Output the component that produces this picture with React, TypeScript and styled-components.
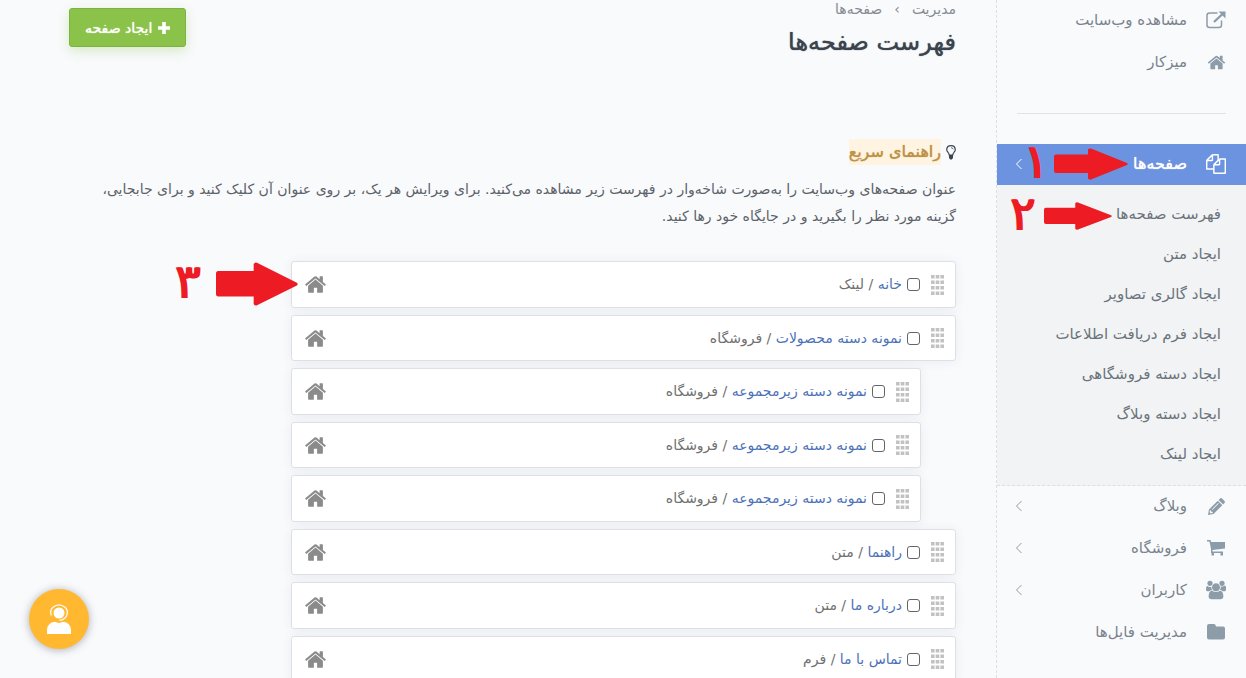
import React from 'react';
import styled, { createGlobalStyle } from 'styled-components';

const Global = createGlobalStyle`
  *, *::before, *::after { box-sizing: border-box; }
  body { margin: 0; background: #f9fafc; color: #5c6269; font: 15px/27px "DejaVu Sans", sans-serif; }
  a { color: inherit; text-decoration: none; }
  ul, ol { list-style: none; margin: 0; padding: 0; }
`;

const Shell = styled.div`
  display: flex;
  height: 100vh;
  overflow: hidden;
`;
const Sidebar = styled.nav`
  flex: 0 0 250px;
  border-left: 1px dashed #dcdfe3;
  font-size: 15px;
  line-height: 40px;
  color: #7a838c;
  overflow: hidden;
`;
const MenuLink = styled.a<{ $active?: boolean }>`
  display: flex;
  align-items: center;
  height: ${p => (p.$active ? 41 : 42)}px;
  padding: 0 18px 2px;
  background: ${p => (p.$active ? '#6c93e0' : 'transparent')};
  color: ${p => (p.$active ? '#fff' : 'inherit')};
  font-size: ${p => (p.$active ? 16 : 15)}px;
  text-shadow: ${p => (p.$active ? '0 0 1px currentColor' : 'none')};
  svg { color: ${p => (p.$active ? '#fff' : '#8d9ca9')}; }
`;
const IconSlot = styled.span`
  display: flex;
  justify-content: center;
  width: 24px;
  margin-left: 17px;
`;
const Chevron = styled.svg`
  margin-right: auto;
`;
const Divider = styled.hr`
  margin: 29px 20px 30px;
  border: 0;
  border-top: 1px solid #dfe4e9;
`;
const SubMenu = styled.ul`
  background: #f2f3f5;
  border-bottom: 1px dashed #dcdfe3;
  padding: 9px 25px 11px;
  line-height: 40px;
  color: #6a737b;
`;

const Main = styled.main`
  flex: 1;
  min-width: 0;
  padding: 0 40px 0 69px;
`;
const Header = styled.header`
  display: flex;
  justify-content: space-between;
  align-items: flex-start;
  height: 139px;
`;
const Crumbs = styled.ol`
  display: flex;
  align-items: center;
  gap: 12px;
  font-size: 14px;
  line-height: 18px;
  color: #858b92;
`;
const Title = styled.h1`
  margin: 4px 0 0;
  font-size: 24px;
  line-height: 40px;
  font-weight: 400;
  color: #3b444e;
  text-shadow: 0 0 1px currentColor;
`;
const AddButton = styled.button`
  display: flex;
  align-items: center;
  gap: 6px;
  height: 39px;
  margin-top: 8px;
  padding: 0 15px;
  border: 1px solid #7cb342;
  border-radius: 3px;
  background: #8bc34a;
  box-shadow: 0 4px 12px rgba(139, 195, 74, 0.3);
  color: #fff;
  font: 14px/20px "DejaVu Sans", sans-serif;
  text-shadow: 0 0 1px currentColor;
`;
const GuideTitle = styled.h2`
  display: flex;
  align-items: center;
  gap: 5px;
  margin: 0;
  font-size: 16px;
  line-height: 26px;
  font-weight: 400;
  color: #3b444e;
`;
const Mark = styled.mark`
  background: #fff3e2;
  color: #bd9147;
  text-shadow: 0 0 1px currentColor;
`;
const Guide = styled.p`
  margin: 11px 0 31px;
  font-size: 14px;
  line-height: 27px;
`;
const Tree = styled.ul`
  display: flex;
  flex-direction: column;
  gap: 7px;
  width: 77%;
  max-width: 665px;
`;
const Item = styled.li<{ $child?: boolean }>`
  display: flex;
  flex-shrink: 0;
  align-items: center;
  height: 46px;
  margin-right: ${p => (p.$child ? 35 : 0)}px;
  padding: 0 11px 0 12px;
  border: 1px solid #dde0e5;
  border-radius: 3px;
  background: #fff;
  box-shadow: 0 1px 12px rgba(40, 60, 90, 0.07);
  font-size: 14px;
  color: #707070;
  a { color: #4d72b8; }
  &:nth-child(odd) { height: 47px; }
`;
const Tick = styled.input`
  appearance: none;
  width: 13px;
  height: 13px;
  margin: 0 11px 0 5px;
  border: 1px solid #62666b;
  border-radius: 3px;
  background: #fff;
`;
const HomeLink = styled.a`
  display: flex;
  margin-right: auto;
  svg { color: #8b8b8b; }
`;
const ChatButton = styled.button`
  position: fixed;
  left: 29px;
  bottom: 29px;
  display: flex;
  align-items: center;
  justify-content: center;
  width: 60px;
  height: 60px;
  padding: 0;
  border: 0;
  border-radius: 50%;
  background: #ffb830;
  box-shadow: 0 1px 8px rgba(60, 60, 80, 0.4);
`;
const Callout = styled.div<{ $x: number; $y: number; $gap: number }>`
  position: absolute;
  left: ${p => p.$x}px;
  top: ${p => p.$y}px;
  display: flex;
  direction: ltr;
  align-items: center;
  gap: ${p => p.$gap}px;
  color: #ed1c24;
  line-height: 44px;
  pointer-events: none;
`;
const Digit = styled.span`
  display: flex;
  justify-content: center;
  width: 30px;
  height: 50px;
  font-size: 48px;
  text-shadow: 1px 0 currentColor, -1px 0 currentColor;
`;
const Anchor = styled.div`
  position: relative;
`;

const HOME = 'M1472 992v480q0 26-19 45t-45 19h-384v-384h-256v384h-384q-26 0-45-19t-19-45v-480q0-1 .5-3t.5-3l575-474 575 474q1 2 1 6zm223-69l-62 74q-8 9-21 11h-3q-13 0-21-7l-692-577-692 577q-12 8-24 7-13-2-21-11l-62-74q-8-10-7-23.5t11-21.5l719-599q32-26 76-26t76 26l244 204v-195q0-14 9-23t23-9h192q14 0 23 9t9 23v408l219 182q10 8 11 21.5t-7 23.5z';
const COPY = 'M1696 384q40 0 68 28t28 68v1216q0 40-28 68t-68 28h-960q-40 0-68-28t-28-68v-288h-544q-40 0-68-28t-28-68v-672q0-40 20-88t48-76l408-408q28-28 76-48t88-20h416q40 0 68 28t28 68v328q68-40 128-40h416zm-544 213l-299 299h299v-299zm-640-384l-299 299h299v-299zm196 647l316-316v-416h-384v416q0 40-28 68t-68 28h-416v640h512v-256q0-40 20-88t48-76zm956 804v-1152h-384v416q0 40-28 68t-68 28h-416v640h896z';
const USERS = 'M593 896q-162 5-265 128h-134q-82 0-138-40.5t-56-118.5q0-353 124-353 6 0 43.5 21t97.5 42.5 119 21.5q67 0 133-23-5 37-5 66 0 159 93 293zm1071 637q0 120-73 189.5t-194 69.5h-874q-121 0-194-69.5t-73-189.5q0-53 3.5-103.5t14-109 26.5-108.5 43-97.5 62-81 85.5-53.5 111.5-20q10 0 43 21.5t73 48 107 48 135 21.5 135-21.5 107-48 73-48 43-21.5q61 0 111.5 20t85.5 53.5 62 81 43 97.5 26.5 108.5 14 109 3.5 103.5zm-1024-1277q0 106-75 181t-181 75-181-75-75-181 75-181 181-75 181 75 75 181zm704 384q0 159-112.5 271.5t-271.5 112.5-271.5-112.5-112.5-271.5 112.5-271.5 271.5-112.5 271.5 112.5 112.5 271.5zm576 225q0 78-56 118.5t-138 40.5h-134q-103-123-265-128 93-134 93-293 0-29-5-66 66 23 133 23 59 0 119-21.5t97.5-42.5 43.5-21q124 0 124 353zm-128-609q0 106-75 181t-181 75-181-75-75-181 75-181 181-75 181 75 75 181z';

const Glyph = ({ d, size, box = '0 0 1792 1792' }: { d: string; size: number; box?: string }) => (
  <svg width={size} height={size} viewBox={box} fill="currentColor" aria-hidden="true"><path d={d} /></svg>
);
const PencilIcon = () => (
  <svg width="17" height="17" viewBox="0 0 17 17" fill="currentColor" aria-hidden="true">
    <path fillRule="evenodd" d="M0 17L1 11.500L9.800 2.700L14.300 7.200L5.500 16ZM2 12.300L1.600 14.200L2.800 15.400L4.700 15L4.600 13.800L3.200 13.700L3.100 12.400ZM4.500 11.800L10.800 5.500L10.200 4.900L3.900 11.200Z" />
    <path d="M10.600 1.900L12 .5Q13 -.3 14 .5L16.500 3Q17.300 4 16.500 5L15.100 6.400Z" />
  </svg>
);
const OutIcon = () => (
  <svg width="20" height="18" viewBox="0 0 20 18" fill="none" stroke="currentColor" aria-hidden="true">
    <path d="M11.500 2H3.500Q1 2 1 4.500V14Q1 16.500 3.500 16.500H13Q15.500 16.500 15.500 14V9.500" strokeWidth="1.500" />
    <path d="M8 11L16.500 3" strokeWidth="2.400" />
    <path d="M12.500 .5H19.500V7.500Z" fill="currentColor" stroke="none" />
  </svg>
);
const CartIcon = () => (
  <svg width="18" height="16" viewBox="0 0 18 16" fill="currentColor" aria-hidden="true">
    <path d="M0 0H3.500L4.200 2H18V8.500L5.500 10V11.500H16V15.500H13.500V13H7V15.500H4.500V13H4V9L2.500 1.500H0Z" />
  </svg>
);
const FolderIcon = () => (
  <svg width="18" height="16" viewBox="0 0 18 16" fill="currentColor" aria-hidden="true">
    <path d="M2 0H7Q8 0 8.500 1L9 2.500H16Q18 2.500 18 4.500V13.500Q18 15.500 16 15.500H2Q0 15.500 0 13.500V2Q0 0 2 0Z" />
  </svg>
);
const More = () => (
  <Chevron width="8" height="12" viewBox="0 0 8 12" fill="none" stroke="currentColor" aria-hidden="true">
    <path d="M6.500 1L1.500 6L6.500 11" />
  </Chevron>
);
const Grip = () => (
  <svg width="13" height="20" viewBox="0 0 13 20" fill="#c2c2c2" aria-hidden="true">
    {[0, 5.5, 11, 16.5].map(y => [0, 4.7, 9.4].map(x => <rect key={`${x}-${y}`} x={x} y={y} width="3.6" height="3.5" />))}
  </svg>
);
const Bulb = () => (
  <svg width="10" height="15" viewBox="0 0 10 15" fill="none" stroke="currentColor" aria-hidden="true">
    <path d="M3.200 10Q3.200 8.500 2 7.300Q.7 6.200 .7 4.600Q1 .7 5 .7Q9 .7 9.300 4.600Q9.300 6.200 8 7.300Q6.800 8.500 6.800 10Z" strokeWidth="1.200" />
    <path d="M5 2.700Q6.800 2.800 7.200 4.300" strokeWidth=".8" />
    <path d="M3 10H7V13L5.800 14.500H4.200L3 13Z" fill="currentColor" stroke="none" />
  </svg>
);
const Agent = () => (
  <svg width="24" height="31" viewBox="0 0 24 31" fill="#fff" aria-hidden="true">
    <circle cx="12" cy="9" r="5.500" />
    <path d="M4.300 11.500Q2.500 6 6 3.200Q9 .8 12 .8Q15 .8 18 3.200Q21.500 6 19.700 11.500Q18 15.800 12.500 16.300" fill="none" stroke="#fff" strokeWidth="1.200" />
    <path d="M0 30V26Q.5 18.500 8 17.800Q12 20 16 17.800Q23.500 18.500 24 26V30Z" />
  </svg>
);
const Arrow = ({ w, h }: { w: number; h: number }) => (
  <svg width={w} height={h} viewBox="0 0 74 32" preserveAspectRatio="none" fill="currentColor" aria-hidden="true">
    <path d="M2 6.500H34V1.500Q35 0 37 .5L73 15Q74.500 16 73 17L37 31.500Q35 32 34 30.500V25H2Q0 25 0 23V8.500Q0 6.500 2 6.500Z" />
  </svg>
);

const subPages = ['فهرست صفحه‌ها', 'ایجاد متن', 'ایجاد گالری تصاویر', 'ایجاد فرم دریافت اطلاعات', 'ایجاد دسته فروشگاهی', 'ایجاد دسته وبلاگ', 'ایجاد لینک'];
const pages = [
  { name: 'خانه', kind: 'لینک' },
  { name: 'نمونه دسته محصولات', kind: 'فروشگاه' },
  { name: 'نمونه دسته زیرمجموعه', kind: 'فروشگاه', child: true },
  { name: 'نمونه دسته زیرمجموعه', kind: 'فروشگاه', child: true },
  { name: 'نمونه دسته زیرمجموعه', kind: 'فروشگاه', child: true },
  { name: 'راهنما', kind: 'متن' },
  { name: 'درباره ما', kind: 'متن' },
  { name: 'تماس با ما', kind: 'فرم' },
];

export default function App() {
  return (
    <>
      <Global />
      <Shell dir="rtl" lang="fa">
        <Sidebar>
          <MenuLink href="#site"><IconSlot><OutIcon /></IconSlot>مشاهده وب‌سایت</MenuLink>
          <MenuLink href="#desk"><IconSlot><Glyph d={HOME} size={19} /></IconSlot>میزکار</MenuLink>
          <Divider />
          <Anchor>
            <MenuLink href="#pages" $active><IconSlot><Glyph d={COPY} size={20} /></IconSlot>صفحه‌ها<More /></MenuLink>
            <Callout $x={24} $y={-5} $gap={3}><Digit>۱</Digit><Arrow w={74} h={32} /></Callout>
          </Anchor>
          <Anchor>
            <SubMenu>{subPages.map(s => <li key={s}><a href="#sub">{s}</a></li>)}</SubMenu>
            <Callout $x={11} $y={6} $gap={6}><Digit>۲</Digit><Arrow w={68} h={28} /></Callout>
          </Anchor>
          <MenuLink href="#blog"><IconSlot><PencilIcon /></IconSlot>وبلاگ<More /></MenuLink>
          <MenuLink href="#shop"><IconSlot><CartIcon /></IconSlot>فروشگاه<More /></MenuLink>
          <MenuLink href="#users"><IconSlot><Glyph d={USERS} size={20} box="0 0 1920 1792" /></IconSlot>کاربران<More /></MenuLink>
          <MenuLink href="#files"><IconSlot><FolderIcon /></IconSlot>مدیریت فایل‌ها</MenuLink>
        </Sidebar>
        <Main>
          <Header>
            <div>
              <Crumbs><li><a href="#admin">مدیریت</a></li><li aria-hidden="true">›</li><li>صفحه‌ها</li></Crumbs>
              <Title>فهرست صفحه‌ها</Title>
            </div>
            <AddButton type="button">
              <svg width="12" height="12" viewBox="0 0 12 12" fill="#fff" aria-hidden="true"><path d="M4.200 0H7.800V4.200H12V7.800H7.800V12H4.200V7.800H0V4.200H4.200Z" /></svg>
              ایجاد صفحه
            </AddButton>
          </Header>
          <GuideTitle><Bulb /><Mark>راهنمای سریع</Mark></GuideTitle>
          <Guide>عنوان صفحه‌های وب‌سایت را به‌صورت شاخه‌وار در فهرست زیر مشاهده می‌کنید. برای ویرایش هر یک، بر روی عنوان آن کلیک کنید و برای جابجایی، گزینه مورد نظر را بگیرید و در جایگاه خود رها کنید.</Guide>
          <Anchor>
            <Tree>
              {pages.map((p, i) => (
                <Item key={i} $child={p.child}>
                  <Grip />
                  <Tick type="checkbox" aria-label={p.name} />
                  <span><a href="#edit">{p.name}</a> / {p.kind}</span>
                  <HomeLink href="#home" aria-label="خانه"><Glyph d={HOME} size={23} /></HomeLink>
                </Item>
              ))}
            </Tree>
            <Callout $x={104} $y={-2} $gap={13}><Digit>۳</Digit><Arrow w={82} h={44} /></Callout>
          </Anchor>
        </Main>
      </Shell>
      <ChatButton type="button" aria-label="پشتیبانی"><Agent /></ChatButton>
    </>
  );
}
